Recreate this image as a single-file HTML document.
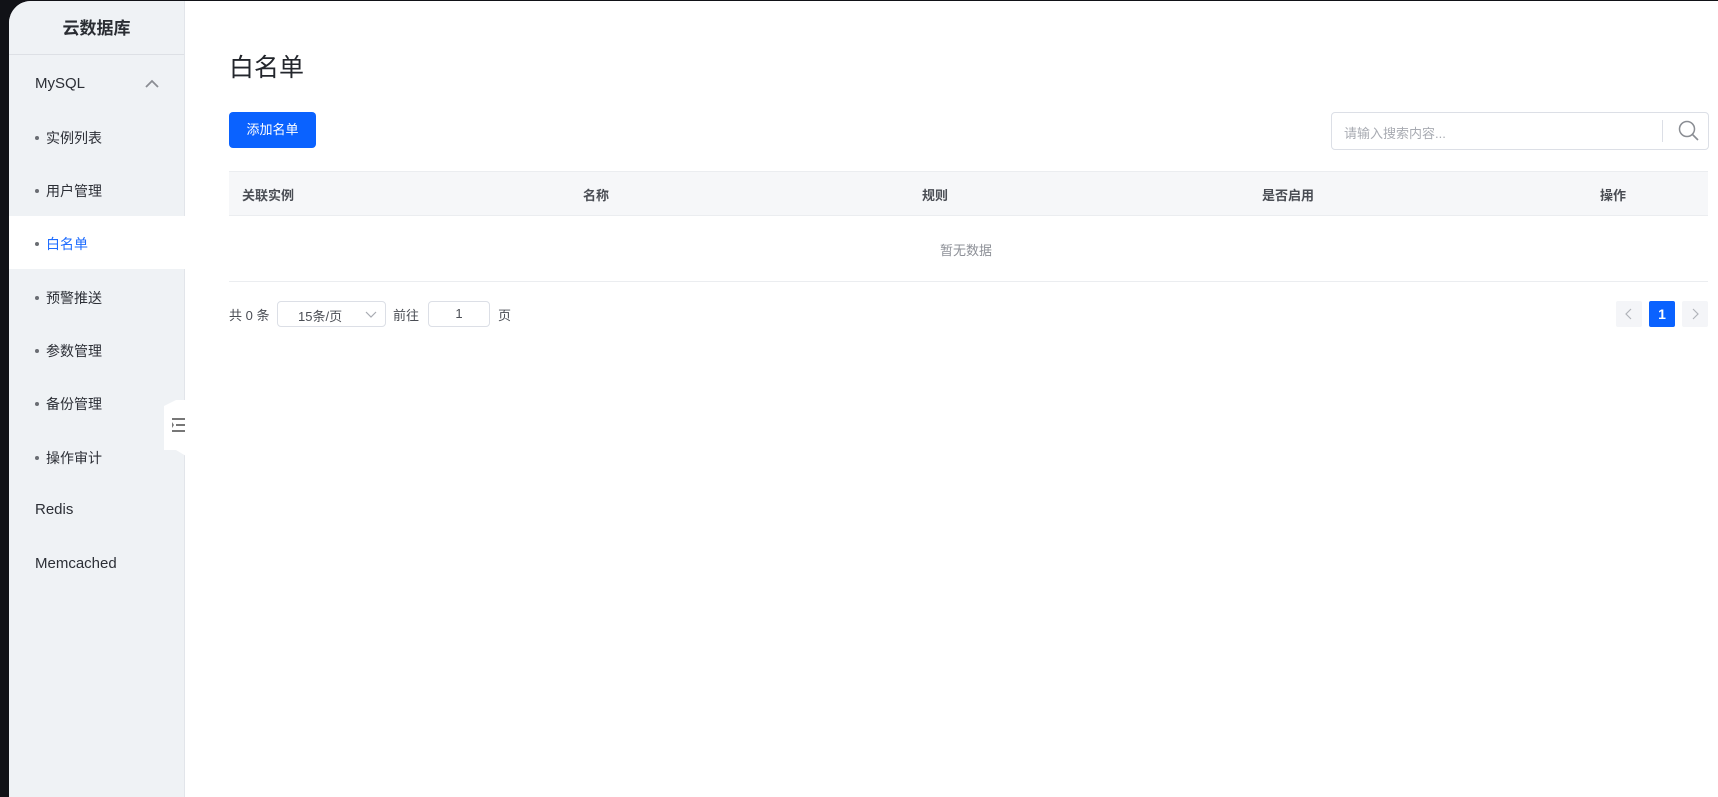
<!DOCTYPE html>
<html><head><meta charset="utf-8"><style>
*{margin:0;padding:0;box-sizing:border-box}
body{width:1718px;height:797px;background:#111217;font-family:"Liberation Sans","Noto Sans CJK SC",sans-serif;position:relative;overflow:hidden}
.win{position:absolute;left:9px;top:1px;right:0;bottom:0;background:#fff;border-top-left-radius:22px;overflow:hidden}
.side{position:absolute;left:0;top:0;width:176px;bottom:0;background:#eff2f5;border-right:1px solid #e2e5ea}
.logo{height:54px;border-bottom:1px solid #dde0e5;text-align:center;font-size:17px;font-weight:bold;color:#2a2d33;line-height:56px}
.s{position:absolute;font-size:14px;color:#2c2f36}
.s.top{left:26px;font-size:15px}
.s.sub{left:37px}
.s.sub:before{content:"";position:absolute;left:-11px;top:8px;width:4px;height:4px;border-radius:50%;background:#6a6d73}
.act{position:absolute;left:0;top:215px;width:176px;height:53px;background:#fff}
.abs{position:absolute}
</style></head><body>
<div class="win">
<div class="side">
<div class="logo">云数据库</div>
<div class="s top" style="top:74px">MySQL</div>
<svg class="abs" style="left:136px;top:78px" width="14" height="10"><path d="M1 8 L7 2 L13 8" fill="none" stroke="#8a8d93" stroke-width="1.8"/></svg>
<div class="act"></div>
<div class="s sub" style="top:127px">实例列表</div>
<div class="s sub" style="top:180px">用户管理</div>
<div class="s sub" style="top:233px;color:#1e6cff">白名单</div>
<div class="s sub" style="top:287px">预警推送</div>
<div class="s sub" style="top:340px">参数管理</div>
<div class="s sub" style="top:393px">备份管理</div>
<div class="s sub" style="top:447px">操作审计</div>
<div class="s top" style="top:500px">Redis</div>
<div class="s top" style="top:554px">Memcached</div>
</div>
<svg class="abs" style="left:155px;top:399px" width="22" height="56"><path d="M22 0 L22 56 L12 50 L0 50 L0 6 L12 0 Z" fill="#fff"/><g stroke="#777" stroke-width="2"><path d="M8 19 H21 M12 25 H21 M8 31 H21"/></g><path d="M8 22 L10 25 L8 28" fill="#777"/></svg>
<div class="abs" style="left:220px;top:47px;font-size:25px;color:#23262c">白名单</div>
<div class="abs" style="left:220px;top:111px;width:87px;height:36px;background:#0a62ff;border-radius:4px;color:#fff;font-size:13px;line-height:36px;text-align:center">添加名单</div>
<div class="abs" style="left:1322px;top:111px;width:378px;height:38px;border:1px solid #dcdfe6;border-radius:4px">
<div class="abs" style="left:12px;top:10px;font-size:13px;color:#a8abb2">请输入搜索内容...</div>
<div class="abs" style="left:330px;top:7px;width:1px;height:22px;background:#dcdfe6"></div>
<svg class="abs" style="left:345px;top:6px" width="24" height="24"><circle cx="10" cy="10" r="7.5" fill="none" stroke="#8a8d93" stroke-width="1.5"/><path d="M15.5 15.5 L21 21" stroke="#8a8d93" stroke-width="1.6"/></svg>
</div>
<div class="abs" style="left:220px;top:170px;width:1479px;height:45px;background:#f6f7f9;border-top:1px solid #ebedf0;border-bottom:1px solid #ebedf0;font-size:13px;font-weight:bold;color:#4a4d54">
<span class="abs" style="left:13px;top:13px">关联实例</span>
<span class="abs" style="left:354px;top:13px">名称</span>
<span class="abs" style="left:693px;top:13px">规则</span>
<span class="abs" style="left:1033px;top:13px">是否启用</span>
<span class="abs" style="left:1371px;top:13px">操作</span>
</div>
<div class="abs" style="left:220px;top:280px;width:1479px;height:1px;background:#ebedf0"></div>
<div class="abs" style="left:931px;top:239px;font-size:13px;color:#8d9097">暂无数据</div>
<div class="abs" style="left:220px;top:304px;font-size:13px;color:#4a4d54">共 0 条</div>
<div class="abs" style="left:268px;top:300px;width:109px;height:26px;border:1px solid #dcdfe6;border-radius:4px;font-size:13px;color:#4a4d54"><span class="abs" style="left:20px;top:4px">15条/页</span><svg class="abs" style="left:87px;top:9px" width="12" height="8"><path d="M1 1 L6 6 L11 1" fill="none" stroke="#a8abb2" stroke-width="1.2"/></svg></div>
<div class="abs" style="left:384px;top:304px;font-size:13px;color:#4a4d54">前往</div>
<div class="abs" style="left:419px;top:300px;width:62px;height:26px;border:1px solid #dcdfe6;border-radius:4px;font-size:13px;color:#4a4d54;text-align:center;line-height:24px">1</div>
<div class="abs" style="left:489px;top:304px;font-size:13px;color:#4a4d54">页</div>
<div class="abs" style="left:1607px;top:300px;width:26px;height:26px;background:#f4f5f8;border-radius:2px"><svg width="26" height="26"><path d="M15 8 L10 13 L15 18" fill="none" stroke="#b0b3b9" stroke-width="1.2"/></svg></div>
<div class="abs" style="left:1640px;top:300px;width:26px;height:26px;background:#0a62ff;border-radius:2px;color:#fff;font-weight:bold;font-size:14px;text-align:center;line-height:26px">1</div>
<div class="abs" style="left:1673px;top:300px;width:26px;height:26px;background:#f4f5f8;border-radius:2px"><svg width="26" height="26"><path d="M11 8 L16 13 L11 18" fill="none" stroke="#b0b3b9" stroke-width="1.2"/></svg></div>
</div>
</body></html>
